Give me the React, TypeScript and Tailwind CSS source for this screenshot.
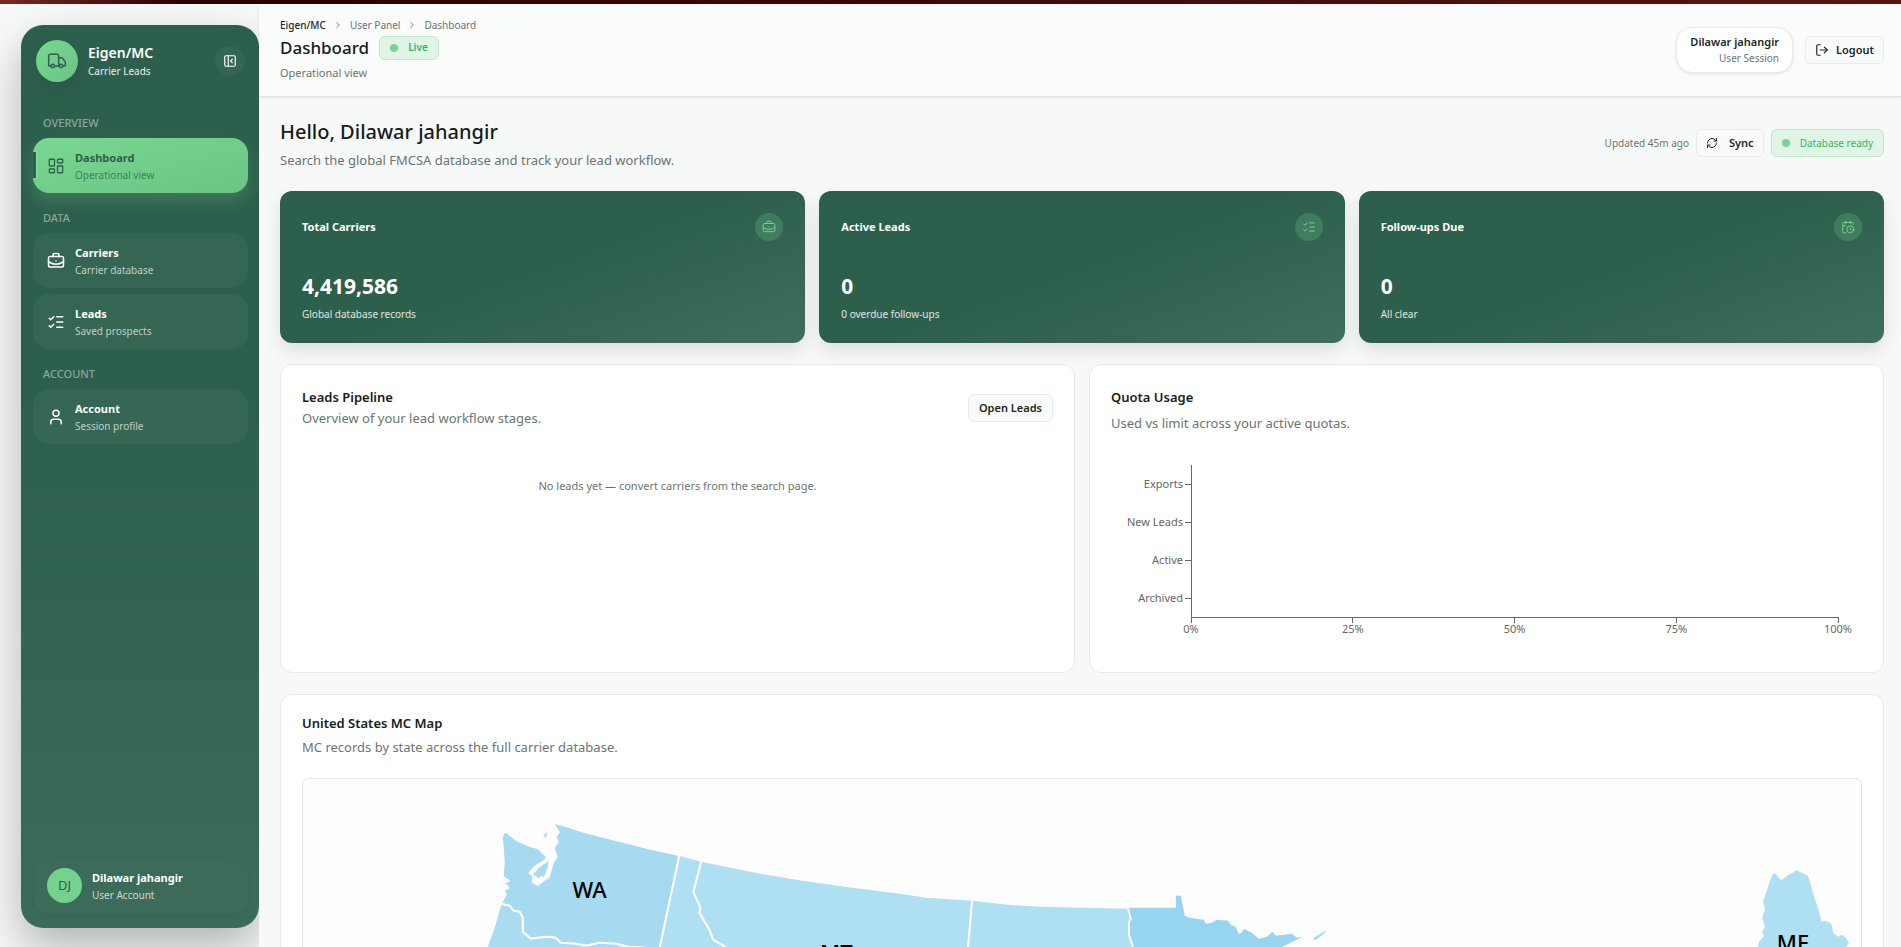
import type { ReactNode } from 'react';
import {
  BriefcaseBusiness,
  CalendarClock,
  ChevronRight,
  LayoutDashboard,
  ListChecks,
  LogOut,
  PanelLeftClose,
  RefreshCw,
  Truck,
  User,
  type LucideIcon,
} from 'lucide-react';

type NavItem = {
  label: string;
  hint: string;
  icon: LucideIcon;
  active?: boolean;
};

const NAV: { title: string; items: NavItem[] }[] = [
  {
    title: 'Overview',
    items: [
      { label: 'Dashboard', hint: 'Operational view', icon: LayoutDashboard, active: true },
    ],
  },
  {
    title: 'Data',
    items: [
      { label: 'Carriers', hint: 'Carrier database', icon: BriefcaseBusiness },
      { label: 'Leads', hint: 'Saved prospects', icon: ListChecks },
    ],
  },
  {
    title: 'Account',
    items: [{ label: 'Account', hint: 'Session profile', icon: User }],
  },
];

const STATS = [
  { title: 'Total Carriers', value: '4,419,586', note: 'Global database records', icon: BriefcaseBusiness },
  { title: 'Active Leads', value: '0', note: '0 overdue follow-ups', icon: ListChecks },
  { title: 'Follow-ups Due', value: '0', note: 'All clear', icon: CalendarClock },
];

const QUOTAS = ['Exports', 'New Leads', 'Active', 'Archived'];
const TICKS = [0, 25, 50, 75, 100];

function SidebarLink({ item }: { item: NavItem }) {
  const Icon = item.icon;
  return (
    <a
      href="#"
      className={`relative flex h-[55px] items-center gap-[10px] overflow-hidden rounded-2xl px-[14px] ${
        item.active
          ? 'bg-linear-to-br from-[#78d890] to-[#6bc485] text-[#2d5f4d]'
          : 'bg-white/4 text-white'
      }`}
    >
      {item.active && (
        <span className="absolute top-[14px] left-0 h-[26px] w-[3px] bg-[#2d5f4d] shadow-[0_0_2px_rgba(255,255,255,0.7)]" />
      )}
      <Icon className="h-[18px] w-[18px] shrink-0" strokeWidth={item.active ? 1.7 : 2} />
      <span className="flex flex-col">
        <span className="text-[11px] leading-[18px] font-bold">{item.label}</span>
        <span
          className={`text-[10px] leading-4 ${
            item.active ? 'text-[#2d5f4d]/75' : 'text-white/70'
          }`}
        >
          {item.hint}
        </span>
      </span>
    </a>
  );
}

function Sidebar() {
  return (
    <aside className="flex w-[259px] shrink-0 pt-[21px] pb-[19px] pl-[21px]">
      <div className="flex flex-1 flex-col rounded-[22px] bg-linear-to-b from-[#2d5f4d] from-40% to-[#3b6b59] pt-[15px] pr-[11px] pb-[15px] pl-3 shadow-[0_20px_45px_rgba(0,0,0,0.28)]">
        <div className="flex items-center gap-[10px] px-[3px]">
          <div className="flex h-[42px] w-[42px] items-center justify-center rounded-full bg-linear-to-br from-[#78d890] to-[#6bc485] text-[#2d5f4d] shadow-[0_8px_16px_rgba(0,0,0,0.08)]">
            <Truck className="h-5 w-5" strokeWidth={1.8} />
          </div>
          <div className="flex-1">
            <p className="text-sm leading-5 font-semibold text-white">Eigen/MC</p>
            <p className="text-[10px] leading-4 text-white/90">Carrier Leads</p>
          </div>
          <button
            aria-label="Collapse sidebar"
            className="flex h-[30px] w-[30px] items-center justify-center rounded-full bg-white/4 text-white"
          >
            <PanelLeftClose className="h-[14px] w-[14px]" />
          </button>
        </div>

        <nav className="mt-[33px] flex flex-col gap-[17px]">
          {NAV.map((group) => (
            <div key={group.title}>
              <h2 className="px-[10px] pb-[7px] text-[11px] leading-4 font-medium text-white/45 uppercase">
                {group.title}
              </h2>
              <div className="flex flex-col gap-[6px]">
                {group.items.map((item) => (
                  <div
                    key={item.label}
                    className={item.active ? 'rounded-2xl shadow-[0_8px_16px_rgba(110,205,138,0.25)]' : ''}
                  >
                    <SidebarLink item={item} />
                  </div>
                ))}
              </div>
            </div>
          ))}
        </nav>

        <div className="mt-auto flex items-center gap-[10px] rounded-2xl bg-white/1 px-[14px] py-[10px] shadow-[0_4px_8px_rgba(0,0,0,0.04)]">
          <div className="flex h-[35px] w-[35px] items-center justify-center rounded-full bg-[#74d28e] text-[13px] text-[#2d5f4d]">
            DJ
          </div>
          <div>
            <p className="text-[11px] leading-[18px] font-bold text-white">Dilawar jahangir</p>
            <p className="text-[10px] leading-4 text-white/75">User Account</p>
          </div>
        </div>
      </div>
    </aside>
  );
}

function StatusPill({ children }: { children: ReactNode }) {
  return (
    <span className="inline-flex items-center gap-[10px] rounded-md border border-[#bfe8cb] bg-[#e1f5e7] px-[10px] text-[10px] text-[#2db565]">
      <span className="h-2 w-2 rounded-full bg-[#77d591]" />
      {children}
    </span>
  );
}

function Header() {
  return (
    <header className="flex h-[93px] shrink-0 items-center justify-between border-b border-[#e1e5e3] bg-[#fafbfb] pr-[17px] pl-[21px] shadow-[0_1px_3px_rgba(0,0,0,0.08)]">
      <div className="pb-[3px]">
        <div className="flex items-center gap-[7px] text-[10px] leading-4 text-[#6b7572]">
          <span className="font-medium text-[#1f2624]">Eigen/MC</span>
          <ChevronRight className="h-[10px] w-[10px]" />
          <span>User Panel</span>
          <ChevronRight className="h-[10px] w-[10px]" />
          <span>Dashboard</span>
        </div>
        <div className="mt-px flex items-center gap-[10px]">
          <h1 className="text-[17px] leading-7 font-medium text-[#161c1a]">Dashboard</h1>
          <div className="flex h-6 font-semibold">
            <StatusPill>Live</StatusPill>
          </div>
        </div>
        <p className="mt-[3px] text-[11px] leading-4 text-[#6b7572]">Operational view</p>
      </div>
      <div className="flex items-center gap-3">
        <div className="rounded-2xl border border-[#e8ebea] bg-white px-[13px] py-[6px] text-right shadow-[0_1px_3px_rgba(0,0,0,0.1)]">
          <p className="text-[11px] leading-4 font-semibold text-[#1f2624]">Dilawar jahangir</p>
          <p className="text-[10px] leading-4 text-[#6b7572]">User Session</p>
        </div>
        <button className="flex h-7 items-center gap-[7px] rounded-md border border-[#e8ebea] bg-[#f9fafa] px-[9px] text-[11px] font-semibold text-[#1f2624]">
          <LogOut className="h-[14px] w-[14px]" />
          Logout
        </button>
      </div>
    </header>
  );
}

function StatCards() {
  return (
    <section className="mt-[21px] grid grid-cols-3 gap-[14px]">
      {STATS.map((s) => (
        <article
          key={s.title}
          className="h-[152px] rounded-xl bg-linear-160 from-[#2d5f4d] from-50% to-[#3e6e5c] px-[22px] pt-[22px] shadow-[0_8px_18px_rgba(0,0,0,0.1)]"
        >
          <div className="flex items-center justify-between">
            <h3 className="text-[11px] font-bold text-white">{s.title}</h3>
            <span className="flex h-7 w-7 items-center justify-center rounded-full bg-[#78d890]/22 text-[#78d890]">
              <s.icon className="h-[14px] w-[14px]" strokeWidth={1.6} />
            </span>
          </div>
          <p className="mt-[30px] text-[21px] leading-[30px] font-bold text-white">{s.value}</p>
          <p className="mt-[5px] text-[10px] leading-4 text-white/85">{s.note}</p>
        </article>
      ))}
    </section>
  );
}

function QuotaChart() {
  return (
    <div className="mt-8 pr-6 pl-[80px]">
      <svg
        className="block h-[180px] w-full overflow-visible fill-[#666666] font-[inherit] text-[11px]"
        stroke="none"
      >
        <g stroke="#666666" strokeWidth="1" shapeRendering="crispEdges">
          <line x1="0" y1="0" x2="0" y2="152" />
          <line x1="0" y1="152" x2="100%" y2="152" />
          {QUOTAS.map((q, i) => (
            <line key={q} x1="-6" x2="0" y1={19 + i * 38} y2={19 + i * 38} />
          ))}
          {TICKS.map((t) => (
            <line key={t} x1={`${t}%`} x2={`${t}%`} y1="152" y2="158" />
          ))}
        </g>
        {QUOTAS.map((q, i) => (
          <text key={q} x="-8" y={23 + i * 38} textAnchor="end">
            {q}
          </text>
        ))}
        {TICKS.map((t) => (
          <text key={t} x={`${t}%`} y="168" textAnchor="middle">
            {t}%
          </text>
        ))}
      </svg>
    </div>
  );
}

function StateMap() {
  return (
    <svg
      viewBox="0 0 1560 240"
      className="block w-full text-[22px]"
      role="img"
      aria-label="MC records by state"
    >
      <g stroke="#fdfdfd" strokeWidth="2" strokeLinejoin="round">
        {/* WA */}
        <path
          fill="#a5daf0"
          d="M250 43L282 53L313 61L345 69L377 76L357 170L325 168L313 165L297 164L284 167L272 165L258 164L253 159L244 158L228 160L220 153L220 139L217 133L211 132L207 127L198 125L200 121L203 116L201 111L206 109L201 104L206 102L200 98L201 84L200 68L199 58L202 52L210 58L215 62L227 67L235 69L240 74L245 79L240 83L232 88L227 94L231 97L230 103L235 106L240 102L246 98L248 91L250 84L254 78L251 69L255 63L253 58L256 53Z"
        />
        {/* Puget Sound islands */}
        <path fill="#a5daf0" stroke="none" d="M230 96L235 90L240 86L246 82L245 88L243 94L241 98L238 97L236 100L233 97Z" />
        <path fill="#a5daf0" stroke="none" d="M238 53L241 56L245 53L243 59Z" />
        {/* OR */}
        <path
          fill="#a9dcf1"
          d="M198 125L207 127L211 132L217 133L220 139L220 153L228 160L244 158L253 159L258 164L272 165L284 167L297 164L313 165L325 168L357 170L362 185L350 240H158L184 168L191 149L196 131Z"
        />
        {/* ID */}
        <path
          fill="#aedff2"
          d="M377 76L399 82L391 113L398 129L397 134L407 151L411 161L423 168L424 190L432 210L440 240H350L362 185L357 170Z"
        />
        {/* MT */}
        <path
          fill="#aedff2"
          d="M399 82L448 92L500 101L550 108L598 114L624 118L670 121L660 240H440L432 210L424 190L423 168L411 161L407 151L397 134L398 129L391 113Z"
        />
        {/* ND */}
        <path
          fill="#aedff2"
          d="M670 121L705 125L739 127L780 128L826 129L829 141L827 143L827 156L831 168L836 200L838 240H660Z"
        />
        {/* MN */}
        <path
          fill="#98d5f0"
          stroke="none"
          d="M827 129H874V117H879L881 128L883 137L887 139L894 140L902 141L904 145L910 144L915 141L926 142L930 147L933 147L937 155L940 154L942 150L946 152L950 154L957 160L965 158L971 153L974 157L990 155L995 159L1001 158L981 168L950 192L930 240H839L837 200L832 168L828 156V143L830 141Z"
        />
        <path fill="#a5daf0" stroke="none" d="M1012 159L1025 151L1021 156L1013 162Z" />
        {/* ME */}
        <path
          fill="#aedff2"
          stroke="none"
          d="M1473 94L1475 95L1478 100L1481 101L1487 96L1493 93L1495 91L1501 94L1507 97L1513 118L1519 136L1520 143L1524 142L1529 144L1531 147L1532 154L1537 158L1541 156L1545 159L1548 164L1544 170L1520 200L1500 240H1470L1457 168L1458 163L1463 157L1461 154L1464 148L1461 139L1464 131L1462 123L1465 114L1471 96Z"
        />
      </g>
      <g textAnchor="middle" className="fill-black font-medium">
        <text x="287" y="119">WA</text>
        <text x="534" y="182">MT</text>
        <text x="1492" y="172">ME</text>
      </g>
    </svg>
  );
}

export default function App() {
  return (
    <div className="flex h-screen flex-col overflow-hidden bg-[#f7f9f8] font-['Noto_Sans',sans-serif]">
      <div className="h-1 shrink-0 bg-linear-to-r from-[#7a2a22] via-[#2b0205] via-10% to-[#5a1512]" />
      <div className="flex min-h-0 flex-1">
        <Sidebar />
        <div className="relative flex min-w-0 flex-1 flex-col bg-[#f7f9f8]">
          <Header />
          <main className="flex-1 overflow-y-auto pr-[17px] pb-6 pl-[21px] [scrollbar-width:none]">
            <div className="mt-[19px] flex items-center justify-between">
              <div>
                <h2 className="text-xl leading-8 font-medium text-[#161c1a]">
                  Hello, Dilawar jahangir
                </h2>
                <p className="mt-[2px] text-[13px] leading-5 text-[#6b7572]">
                  Search the global FMCSA database and track your lead workflow.
                </p>
              </div>
              <div className="flex items-center gap-[7px]">
                <span className="text-[10px] text-[#6b7572]">Updated 45m ago</span>
                <button className="flex h-7 items-center gap-[11px] rounded-md border border-[#e8ebea] bg-[#f9fafa] px-[9px] text-[11px] font-semibold text-[#1f2624]">
                  <RefreshCw className="h-3 w-3" />
                  Sync
                </button>
                <div className="flex h-7">
                  <StatusPill>Database ready</StatusPill>
                </div>
              </div>
            </div>

            <StatCards />

            <section className="mt-[21px] grid grid-cols-2 gap-[14px]">
              <article className="h-[309px] rounded-xl border border-[#e6eae8] bg-white px-[21px] pt-[22px]">
                <div className="flex items-center justify-between">
                  <div>
                    <h3 className="text-[13px] leading-5 font-semibold text-[#161c1a]">Leads Pipeline</h3>
                    <p className="text-[13px] leading-[22px] text-[#6b7572]">
                      Overview of your lead workflow stages.
                    </p>
                  </div>
                  <button className="h-7 rounded-md border border-[#e8ebea] bg-[#f9fafa] px-[10px] text-[11px] font-semibold text-[#1f2624]">
                    Open Leads
                  </button>
                </div>
                <p className="mt-[49px] text-center text-[11px] leading-4 text-[#6b7572]">
                  No leads yet — convert carriers from the search page.
                </p>
              </article>
              <article className="h-[309px] rounded-xl border border-[#e6eae8] bg-white px-[21px] pt-[22px]">
                <h3 className="text-[13px] leading-5 font-semibold text-[#161c1a]">Quota Usage</h3>
                <p className="mt-[6px] text-[13px] leading-5 text-[#6b7572]">
                  Used vs limit across your active quotas.
                </p>
                <QuotaChart />
              </article>
            </section>

            <section className="mt-[21px] rounded-xl border border-[#e6eae8] bg-white px-[21px] pt-[18px] pb-5">
              <h3 className="text-[13px] leading-5 font-semibold text-[#161c1a]">United States MC Map</h3>
              <p className="mt-1 text-[13px] leading-5 text-[#6b7572]">
                MC records by state across the full carrier database.
              </p>
              <div className="mt-[21px] overflow-hidden rounded-md border border-[#e3e6e5] bg-[#fdfdfd]">
                <StateMap />
              </div>
            </section>
          </main>
        </div>
      </div>
    </div>
  );
}
